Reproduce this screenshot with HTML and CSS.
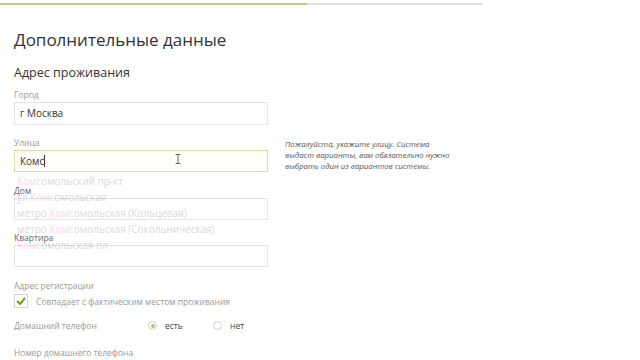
FILE: index.html
```html
<!DOCTYPE html>
<html lang="ru">
<head>
<meta charset="utf-8">
<link rel="stylesheet" href="styles.css">
</head>
<body>
<div class="progress"><div class="progress-done"></div></div>
<div class="page">
  <h1 class="title">Дополнительные данные</h1>
  <h2 class="subtitle">Адрес проживания</h2>

  <div class="field first">
    <div class="label">Город</div>
    <div class="input tall">г Москва</div>
  </div>

  <div class="row">
    <div class="field street">
      <div class="label">Улица</div>
      <div class="input active">Комс<span class="caret"></span>
        <svg class="ibeam" width="6" height="10" viewBox="0 0 6 10"><path d="M0.5 0.5h5M0.5 9.5h5M3 0.5v9" stroke="#666" stroke-width="1" fill="none"/></svg>
      </div>
      <ul class="suggest">
        <li><span class="hl">Комс</span>омольский пр-кт</li>
        <li>ул <span class="hl">Комс</span>омольская</li>
        <li>метро <span class="hl">Комс</span>омольская (Кольцевая)</li>
        <li>метро <span class="hl">Комс</span>омольская (Сокольническая)</li>
        <li><span class="hl">Комс</span>омольская пл</li>
      </ul>
    </div>
    <p class="help">Пожалуйста, укажите улицу. Система<br>выдаст варианты, вам обязательно нужно<br>выбрать один из вариантов системы.</p>
  </div>

  <div class="field house">
    <div class="label dark">Дом</div>
    <div class="input"></div>
  </div>

  <div class="field flat">
    <div class="label dark">Квартира</div>
    <div class="input"></div>
  </div>

  <div class="field reg">
    <div class="label">Адрес регистрации</div>
    <div class="check-row">
      <span class="checkbox"><svg width="10" height="8" viewBox="0 0 10 8"><path d="M1 4l3 3 5-6" stroke="#6a9e1f" stroke-width="2" fill="none"/></svg></span>
      <span class="check-label">Совпадает с фактическим местом проживания</span>
    </div>
  </div>

  <div class="radio-row">
    <span class="radio-title">Домашний телефон</span>
    <span class="radio on"></span><span class="radio-label">есть</span>
    <span class="radio"></span><span class="radio-label">нет</span>
  </div>

  <div class="label phone">Номер домашнего телефона</div>
  <div class="input short"></div>
</div>
</body>
</html>
```
FILE: styles.css
```css
html, body {
  margin: 0;
  padding: 0;
  background: #fff;
  font-family: "Open Sans", "DejaVu Sans", sans-serif;
  color: #333;
  overflow: hidden;
  height: 360px;
}
.progress {
  margin-top: 3px;
  width: 483px;
  height: 2px;
  background: #e0e0e0;
}
.progress-done {
  width: 307px;
  height: 2px;
  background: #bfd084;
}
.page {
  padding-left: 14px;
}
.title {
  margin: 24px 0 0;
  font-size: 17px;
  font-weight: 400;
  line-height: 22px;
  color: #333;
}
.subtitle {
  margin: 14px 0 0;
  font-size: 12.5px;
  font-weight: 400;
  line-height: 16px;
  color: #333;
}
.field {
  width: 254px;
  margin-top: 10px;
}
.field.first {
  margin-top: 7px;
}
.field.house {
  margin-top: 12px;
}
.field.flat {
  margin-top: 11px;
}
.label {
  font-size: 8.5px;
  line-height: 13px;
  color: #999;
  margin-bottom: 1px;
}
.label.dark {
  color: #666;
}
.input {
  box-sizing: border-box;
  height: 22px;
  border: 1px solid #e3e3e3;
  font-size: 10px;
  line-height: 20px;
  padding-left: 5px;
  color: #333;
  position: relative;
  background: #fff;
}
.input.tall {
  height: 23px;
  line-height: 21px;
}
.input.active {
  border-color: #d2e0a4;
  background: #fefef8;
}
.caret {
  display: inline-block;
  width: 1px;
  height: 12px;
  background: #333;
  vertical-align: -2px;
}
.ibeam {
  position: absolute;
  left: 160px;
  top: 3px;
}
.row {
  display: flex;
  align-items: flex-start;
  gap: 17px;
}
.street {
  position: relative;
  margin-top: 11px;
}
.suggest {
  position: absolute;
  left: 0;
  top: 37px;
  width: 254px;
  margin: 0;
  padding: 0;
  list-style: none;
  z-index: 2;
  opacity: 0.38;
}
.suggest li {
  font-size: 10px;
  line-height: 16px;
  height: 16px;
  padding-left: 3px;
  color: #999;
  white-space: nowrap;
}
.hl {
  color: #f0a0b4;
}
.help {
  margin: 14px 0 0;
  font-size: 7.8px;
  line-height: 11px;
  font-style: italic;
  color: #555;
  white-space: nowrap;
}
.reg {
  margin-top: 12px;
}
.check-row {
  display: flex;
  align-items: center;
  gap: 8px;
  margin-top: 2px;
}
.checkbox {
  box-sizing: border-box;
  width: 14px;
  height: 14px;
  border: 1px solid #d5d5d5;
  display: flex;
  align-items: center;
  justify-content: center;
}
.check-label {
  font-size: 8.5px;
  color: #999;
}
.radio-row {
  display: flex;
  align-items: center;
  margin-top: 11px;
  height: 13px;
}
.radio-title {
  width: 134px;
  font-size: 8.5px;
  color: #999;
}
.radio {
  box-sizing: border-box;
  width: 9px;
  height: 9px;
  border: 1px solid #ccc;
  border-radius: 50%;
  margin-right: 8px;
  position: relative;
}
.radio.on::after {
  content: "";
  position: absolute;
  left: 1.5px;
  top: 1.5px;
  width: 4px;
  height: 4px;
  border-radius: 50%;
  background: #a9c95a;
}
.radio-label {
  font-size: 8.5px;
  color: #444;
  width: 48px;
}
.phone {
  margin-top: 14px;
}
.input.short {
  width: 254px;
}
```
